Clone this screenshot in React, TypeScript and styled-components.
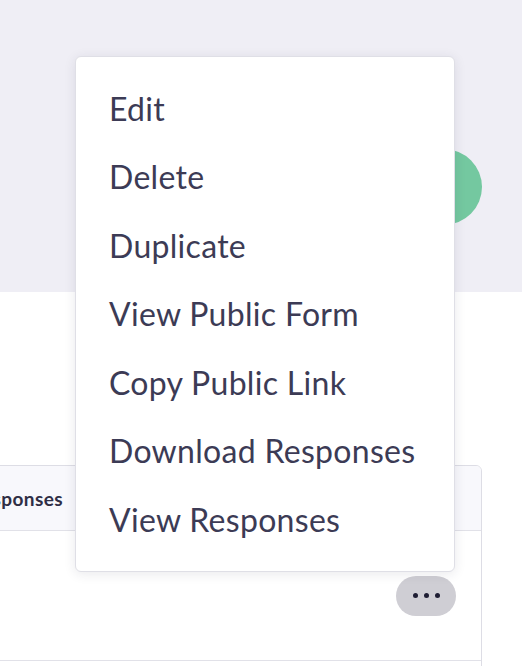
import styled, { createGlobalStyle } from "styled-components";

const GlobalStyle = createGlobalStyle`
  html, body {
    margin: 0;
    padding: 0;
    background: #ffffff;
    font-family: Lato, "Noto Sans", sans-serif;
  }
`;

const menuItems = [
  "Edit",
  "Delete",
  "Duplicate",
  "View Public Form",
  "Copy Public Link",
  "Download Responses",
  "View Responses",
];

export default function App() {
  return (
    <>
      <GlobalStyle />
      <Page>
        <Hero>
          <Avatar />
        </Hero>
        <Content>
          <Card>
            <CardHeader>
              <HeaderCell>Responses</HeaderCell>
            </CardHeader>
            <CardRow>
              <MoreButton aria-label="More actions">
                <Dot />
                <Dot />
                <Dot />
              </MoreButton>
            </CardRow>
            <CardRow $short />
          </Card>
        </Content>
        <Menu>
          {menuItems.map((item) => (
            <MenuItem key={item}>{item}</MenuItem>
          ))}
        </Menu>
      </Page>
    </>
  );
}

const Page = styled.div`
  position: relative;
  width: 522px;
  height: 666px;
  overflow: hidden;
  background: #ffffff;
`;

const Hero = styled.div`
  height: 292px;
  box-sizing: border-box;
  background: #efeef5;
  display: flex;
  justify-content: flex-end;
  align-items: flex-start;
  padding: 149px 40px 0 0;
`;

const Avatar = styled.div`
  width: 76px;
  height: 76px;
  border-radius: 50%;
  background: #74c8a0;
`;

const Content = styled.div`
  padding-top: 173px;
`;

const Card = styled.div`
  margin-left: -60px;
  width: 540px;
  border: 1px solid #dddde5;
  border-radius: 6px;
  overflow: hidden;
  background: #ffffff;
`;

const CardHeader = styled.div`
  height: 64px;
  display: flex;
  align-items: center;
  background: #f8f8fc;
  border-bottom: 1px solid #e1e1e8;
`;

const HeaderCell = styled.div`
  width: 122px;
  text-align: right;
  font-size: 19px;
  font-weight: 700;
  letter-spacing: 0.4px;
  color: #2f2e45;
`;

const CardRow = styled.div<{ $short?: boolean }>`
  height: ${(p) => (p.$short ? "60px" : "129px")};
  display: flex;
  justify-content: flex-end;
  align-items: center;
  padding-right: 25px;
  border-bottom: 1px solid #e1e1e8;
`;

const MoreButton = styled.button`
  width: 60px;
  height: 40px;
  border: none;
  border-radius: 20px;
  background: #cfced4;
  display: flex;
  justify-content: center;
  align-items: center;
  gap: 6px;
  padding: 0;
  cursor: pointer;
`;

const Dot = styled.span`
  width: 5px;
  height: 5px;
  border-radius: 50%;
  background: #1e1d33;
`;

const Menu = styled.ul`
  position: absolute;
  left: 75px;
  top: 56px;
  width: 380px;
  box-sizing: border-box;
  margin: 0;
  padding: 17px 0;
  list-style: none;
  background: #ffffff;
  border: 1px solid #dfdfe6;
  border-radius: 6px;
  box-shadow: 0 2px 12px rgba(40, 40, 70, 0.1);
`;

const MenuItem = styled.li`
  height: 68.5px;
  display: flex;
  align-items: center;
  padding-left: 33px;
  font-size: 32px;
  letter-spacing: 0.3px;
  color: #3c3b55;
  white-space: nowrap;
  cursor: pointer;
`;
